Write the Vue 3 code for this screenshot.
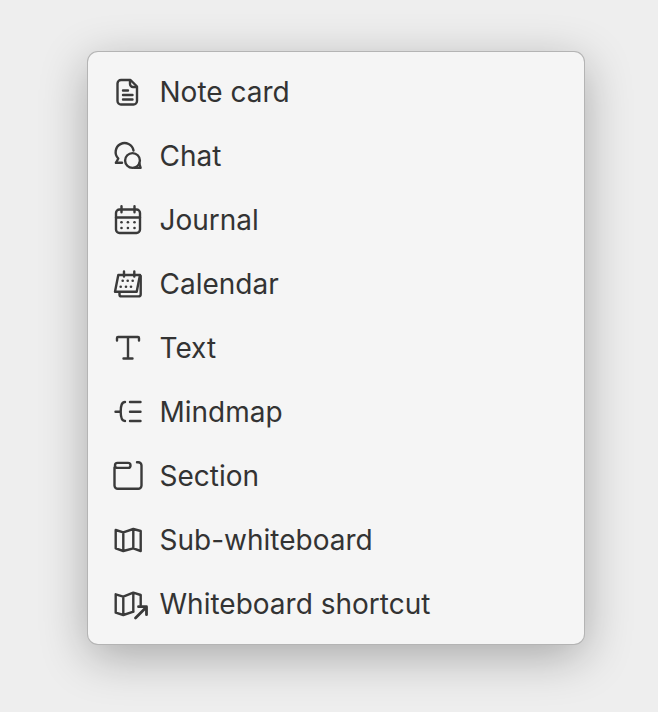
<script setup>
const items = [
  { name: 'Note card', icon: 'note' },
  { name: 'Chat', icon: 'chat' },
  { name: 'Journal', icon: 'journal' },
  { name: 'Calendar', icon: 'calendar' },
  { name: 'Text', icon: 'text' },
  { name: 'Mindmap', icon: 'mindmap' },
  { name: 'Section', icon: 'section' },
  { name: 'Sub-whiteboard', icon: 'map' },
  { name: 'Whiteboard shortcut', icon: 'shortcut' }
]
</script>

<template>
  <div class="page">
    <ul class="menu">
      <li v-for="item in items" :key="item.name" class="menu-item">
        <svg class="icon" viewBox="0 0 32 32" width="32" height="32" fill="none" stroke="currentColor" stroke-width="2.4" stroke-linecap="round" stroke-linejoin="round">
          <template v-if="item.icon === 'note'">
            <path d="M9 4h9.500L25 10.500V25a3.500 3.500 0 0 1-3.500 3.500H9A3.500 3.500 0 0 1 5.500 25V7.500A3.500 3.500 0 0 1 9 4z" />
            <path d="M18 4.500v3.500a3 3 0 0 0 3 3h3.500" />
            <path d="M11 14.500h5M11 19h9.500M11 23.500h9.500" />
          </template>
          <template v-else-if="item.icon === 'chat'">
            <path d="M4 22.800L6.300 18.500A9 9 0 1 1 21.500 10.500" />
            <path d="M4 22.800h6" />
            <circle cx="20.500" cy="20.500" r="7.400" />
            <path d="M27.300 23.500L28.600 27.900H22.500" />
          </template>
          <template v-else-if="item.icon === 'journal'">
            <rect x="4" y="5.500" width="24" height="23.500" rx="3.500" />
            <path d="M4 13.500h24M9.500 2.200v6M22.500 2.200v6" />
            <g fill="currentColor" stroke="none">
              <circle cx="9.500" cy="18.300" r="1.300" />
              <circle cx="15.900" cy="18.300" r="1.300" />
              <circle cx="22.500" cy="18.300" r="1.300" />
              <circle cx="9.500" cy="24" r="1.300" />
              <circle cx="15.900" cy="24" r="1.300" />
              <circle cx="22.500" cy="24" r="1.300" />
            </g>
          </template>
          <template v-else-if="item.icon === 'calendar'">
            <path d="M6.300 7H28l-3.300 16.700H3z" />
            <path d="M28.700 8v18.200a2.200 2.200 0 0 1-2.200 2.200H9.500a2 2 0 0 1-2-2v-2.200" />
            <path d="M12 3.500v5M22.300 3.500v5" />
            <g fill="currentColor" stroke="none">
              <circle cx="10.700" cy="12.700" r="1.300" />
              <circle cx="15.700" cy="12.700" r="1.300" />
              <circle cx="20.700" cy="12.700" r="1.300" />
              <circle cx="8.700" cy="18.700" r="1.300" />
              <circle cx="14" cy="18.700" r="1.300" />
              <circle cx="19" cy="18.700" r="1.300" />
            </g>
          </template>
          <template v-else-if="item.icon === 'text'">
            <path d="M5 8.500V6a1 1 0 0 1 1-1h20a1 1 0 0 1 1 1v2.500M16 5v21.500M11.500 26.500h9" />
          </template>
          <template v-else-if="item.icon === 'mindmap'">
            <path d="M13 6c-3 0-4.300 3-4.300 9.700S10 25 13 25M3.500 15.700h5.200M18 6h10.500M18 15.700h10.500M18 25h10.500" />
          </template>
          <template v-else-if="item.icon === 'section'">
            <rect x="3" y="2.900" width="15.500" height="5" rx="2.500" />
            <path d="M2.500 7.500v18a3.300 3.300 0 0 0 3.300 3.300h20.400a3.300 3.300 0 0 0 3.300-3.300V5.500a3.300 3.300 0 0 0-3.300-3.300H25" />
          </template>
          <template v-else-if="item.icon === 'map'">
            <path d="M3.700 6l7.600 2.300l10-3.300l7.400 2V27l-7.400-2.700l-10 2.700l-7.600-2.700zM11.300 8.300V27M21.300 5v19.300" />
          </template>
          <template v-else>
            <path d="M21.500 23.700l-10.200 3.300l-7.600-2.300V6.300l7.600 2.400l10-4l7.400 2.300v10M11.300 8.700V27M21.300 4.700v19" />
            <path d="M23.500 30l11-11M26.500 18.700h8v8" stroke-width="2.800" />
          </template>
        </svg>
        <span class="label">{{ item.name }}</span>
      </li>
    </ul>
  </div>
</template>

<style scoped>
.page {
  width: 658px;
  height: 712px;
  padding-top: 52px;
  padding-left: 88px;
  box-sizing: border-box;
  background: #eeeeee;
  overflow: hidden;
}
.menu {
  width: 496px;
  box-sizing: border-box;
  margin: 0;
  padding: 8px 0;
  list-style: none;
  background: #f5f5f5;
  border-radius: 10px;
  box-shadow: 0 0 0 1px #b4b4b4, 0 12px 48px rgba(0, 0, 0, 0.3);
}
.menu-item {
  display: flex;
  align-items: center;
  gap: 15.5px;
  height: 64px;
  padding-left: 24px;
  color: #3a3a3a;
}
.icon {
  flex: none;
  overflow: visible;
}
.label {
  font-family: Inter, "Liberation Sans", sans-serif;
  font-size: 28px;
  color: #333333;
}
</style>
